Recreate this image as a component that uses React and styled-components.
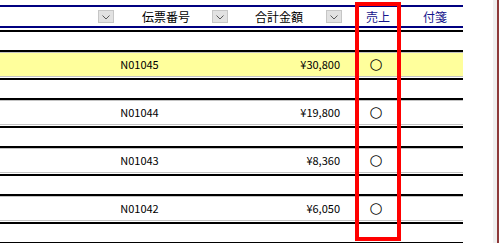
import React from "react";
import styled, { createGlobalStyle } from "styled-components";

const GlobalStyle = createGlobalStyle`
  html, body { margin: 0; padding: 0; background: #fff; }
  body { font-family: "Noto Sans CJK JP", "Noto Sans", sans-serif; }
`;

const Page = styled.div`
  position: relative;
  display: flex;
  width: 500px;
  height: 243px;
  overflow: hidden;
`;

const Sheet = styled.div`
  width: 463px;
  padding-top: 5px;
`;

const Filler = styled.div`
  flex: 1;
`;

const WindowEdge = styled.div`
  width: 4px;
  background: #efefef;
  border-right: 2px solid #8e3a3a;
  margin-right: 1px;
`;

const HeaderRow = styled.div`
  display: grid;
  grid-template-columns: 98px 16px 98px 16px 98px 16px 14px 44px 63px;
  align-items: center;
  height: 19px;
  border-top: 2px solid #000080;
  border-bottom: 2px solid #000080;
  margin-bottom: 2px;
  font-size: 12px;
  line-height: 18px;
`;

const HeaderLabel = styled.div`
  color: ${(p) => (p.$link ? "#14148c" : "#000")};
  text-align: ${(p) => (p.$center ? "center" : "left")};
  padding-left: ${(p) => p.$indent || 0}px;
  white-space: nowrap;
`;

const FilterButton = styled.button`
  width: 16px;
  height: 13px;
  padding: 0;
  margin: 0;
  display: flex;
  align-items: flex-end;
  justify-content: center;
  background: #e2e2e2;
  border: 1px solid #c6c6c6;
  box-sizing: border-box;
  svg { display: block; margin-bottom: 2px; }
`;

const BlankRow = styled.div`
  height: 18px;
  border-top: 2px solid #000;
  border-bottom: ${(p) => (p.$last ? "2px solid #000" : "none")};
`;

const RecordRow = styled.div`
  border-top: 2px solid #000;
  padding-bottom: 1px;
`;

const RecordBody = styled.div`
  display: grid;
  grid-template-columns: 100px 79px 161px 12px 48px 63px;
  align-items: center;
  height: 23px;
  border-top: 1px solid #c4c4c4;
  border-bottom: 1px solid #c4c4c4;
  background: ${(p) => (p.$selected ? "#ffff9c" : "#fff")};
  font-size: 11px;
  line-height: 21px;
  color: #000;
`;

const Cell = styled.div`
  text-align: ${(p) => p.$align || "left"};
  white-space: nowrap;
`;

const Mark = styled.span`
  font-family: "DejaVu Sans", sans-serif;
  font-size: 15px;
  line-height: 21px;
  color: #000;
`;

const Highlight = styled.div`
  position: absolute;
  left: 355px;
  top: 2px;
  width: 46px;
  height: 239px;
  border: 4px solid #f00;
  box-sizing: border-box;
  pointer-events: none;
`;

const Chevron = () => (
  <svg width="8" height="5" viewBox="0 0 8 5">
    <path d="M0.5 0.5 L4 4 L7.5 0.5" fill="none" stroke="#5a5a5a" strokeWidth="1" />
  </svg>
);

const records = [
  { code: "N01045", amount: "¥30,800", selected: true },
  { code: "N01044", amount: "¥19,800" },
  { code: "N01043", amount: "¥8,360" },
  { code: "N01042", amount: "¥6,050" },
];

export default function App() {
  return (
    <>
      <GlobalStyle />
      <Page>
        <Sheet>
          <HeaderRow>
            <div />
            <FilterButton><Chevron /></FilterButton>
            <HeaderLabel $indent={28}>伝票番号</HeaderLabel>
            <FilterButton><Chevron /></FilterButton>
            <HeaderLabel $indent={27}>合計金額</HeaderLabel>
            <FilterButton><Chevron /></FilterButton>
            <div />
            <HeaderLabel $link $center>売上</HeaderLabel>
            <HeaderLabel $link $indent={23}>付箋</HeaderLabel>
          </HeaderRow>
          {records.map((r) => (
            <React.Fragment key={r.code}>
              <BlankRow />
              <RecordRow>
                <RecordBody $selected={r.selected}>
                  <div />
                  <Cell $align="center">{r.code}</Cell>
                  <Cell $align="right">{r.amount}</Cell>
                  <div />
                  <Cell $align="center"><Mark>○</Mark></Cell>
                  <div />
                </RecordBody>
              </RecordRow>
            </React.Fragment>
          ))}
          <BlankRow $last />
        </Sheet>
        <Filler />
        <WindowEdge />
        <Highlight />
      </Page>
    </>
  );
}
